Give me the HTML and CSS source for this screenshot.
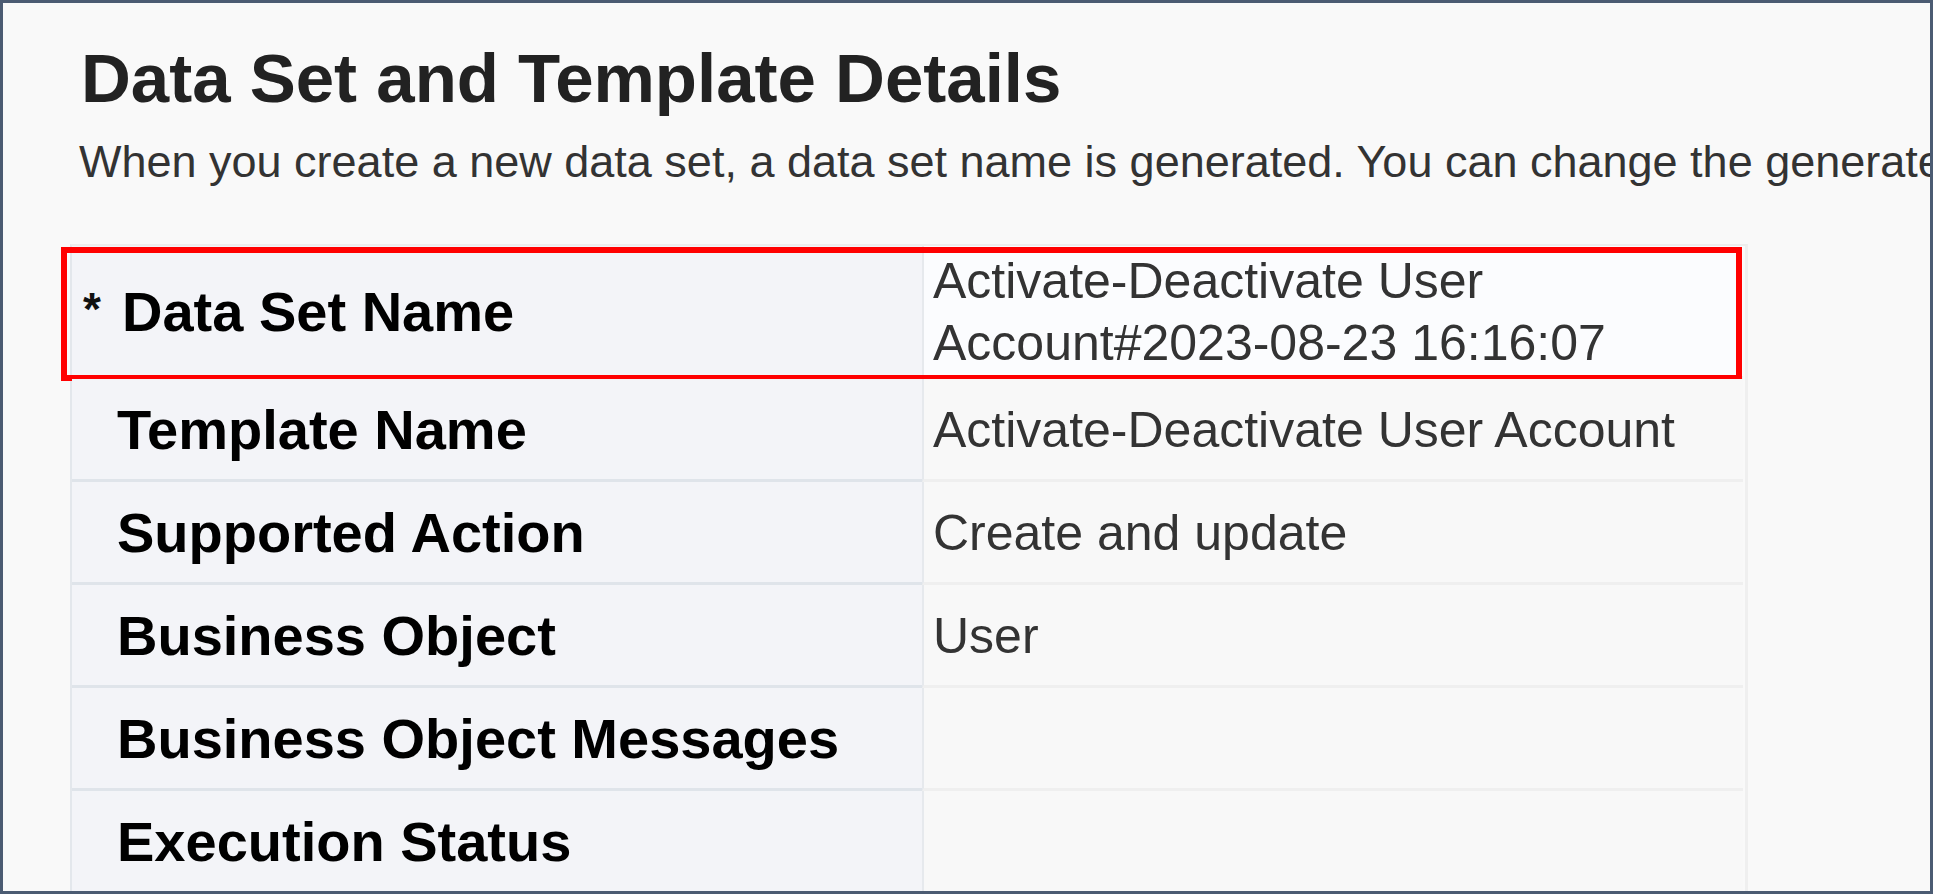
FILE: index.html
```html
<!DOCTYPE html>
<html lang="en">
<head>
    <meta charset="UTF-8">
    <title>Data Set and Template Details</title>
    <link rel="stylesheet" href="styles.css">
</head>
<body>
    <div class="frame">
        <h1 class="title">Data Set and Template Details</h1>
        <p class="intro">When you create a new data set, a data set name is generated. You can change the generated name if you want.</p>

        <div class="details">
            <div class="row row-required">
                <div class="label"><span class="req">*</span>Data Set Name</div>
                <div class="value">Activate-Deactivate User Account#2023-08-23 16:16:07</div>
                <span class="callout"></span>
            </div>
            <div class="row">
                <div class="label">Template Name</div>
                <div class="value">Activate-Deactivate User Account</div>
            </div>
            <div class="row">
                <div class="label">Supported Action</div>
                <div class="value">Create and update</div>
            </div>
            <div class="row">
                <div class="label">Business Object</div>
                <div class="value">User</div>
            </div>
            <div class="row">
                <div class="label">Business Object Messages</div>
                <div class="value"></div>
            </div>
            <div class="row">
                <div class="label">Execution Status</div>
                <div class="value"></div>
            </div>
        </div>
    </div>
</body>
</html>
```

FILE: styles.css
```css
html, body {
    margin: 0;
    height: 100%;
}
body {
    font-family: "Liberation Sans", Arial, sans-serif;
    background: #f9f9f9;
}
.frame {
    box-sizing: border-box;
    height: 894px;
    border: 3px solid #4b5b72;
    background: #f9f9f9;
    padding: 37px 0 0 67px;
    overflow: hidden;
}
.title {
    margin: 0;
    padding-left: 11px;
    font-size: 69px;
    font-weight: bold;
    line-height: 78px;
    color: #222;
    white-space: nowrap;
}
.intro {
    margin: 18px 0 0;
    padding-left: 9px;
    font-size: 45px;
    line-height: 52px;
    color: #333;
    white-space: nowrap;
}
.details {
    width: 1673px;
    margin-top: 56px;
    border-top: 2px solid #ededed;
    border-left: 2px solid #e3e7ec;
    border-right: 3px solid #efefef;
}
.row {
    position: relative;
    display: grid;
    grid-template-columns: 850px 821px;
}
.label, .value {
    box-sizing: border-box;
    min-height: 103px;
    display: flex;
    align-items: center;
}
.label {
    padding-left: 45px;
    background: #f3f4f8;
    border-bottom: 3px solid #dfe4ea;
    font-size: 56px;
    font-weight: bold;
    color: #000;
    white-space: nowrap;
}
.value {
    padding: 4px 8px 2px 9px;
    background: #f8f8f8;
    border-left: 2px solid #e6e9ed;
    border-bottom: 3px solid #efefef;
    font-size: 50px;
    line-height: 62px;
    color: #333;
}
.row-required .label {
    padding-left: 11px;
}
.row-required .value {
    background: #fbfcfe;
}
.req {
    display: inline-block;
    width: 39px;
    align-self: flex-start;
    margin-top: 40px;
    font-size: 46px;
    line-height: 46px;
    font-weight: bold;
    color: #111;
}
.callout {
    position: absolute;
    left: -11px;
    top: 1px;
    right: 3px;
    bottom: -2px;
    border: 6px solid #ff0000;
    pointer-events: none;
}
```
